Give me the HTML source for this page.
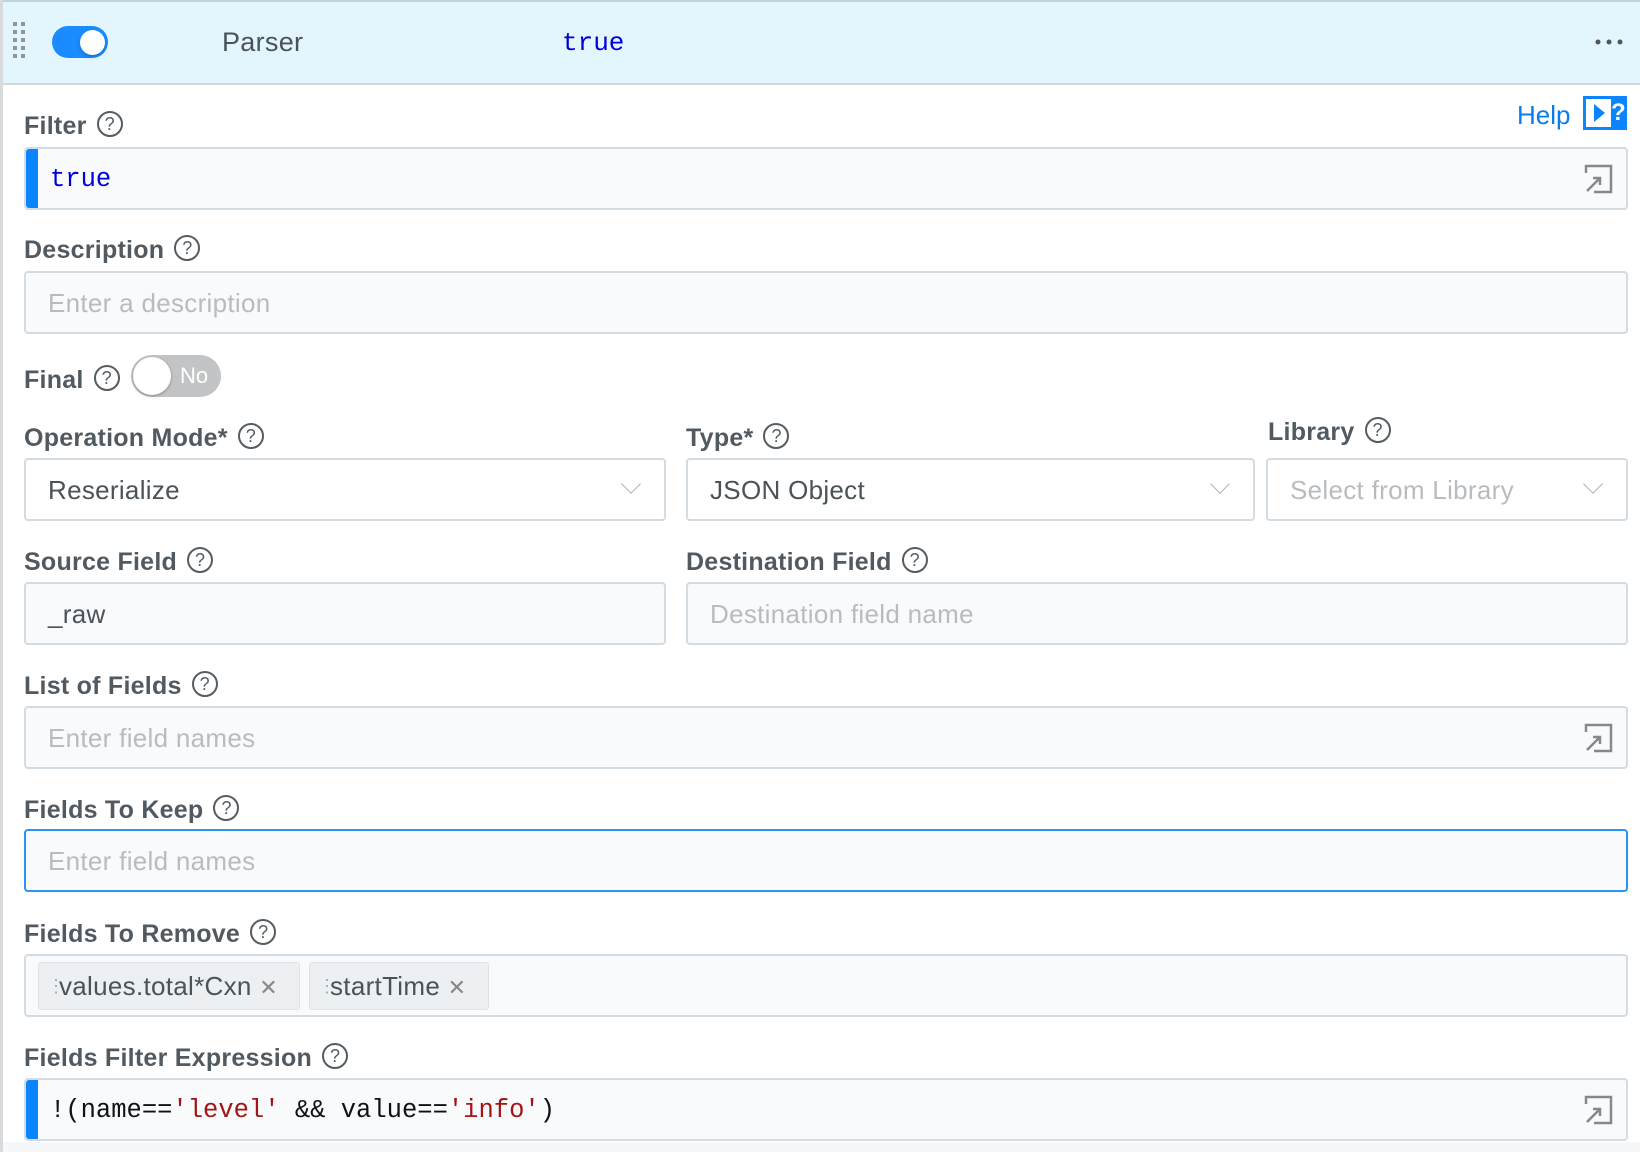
<!DOCTYPE html>
<html><head><meta charset="utf-8">
<style>
*{box-sizing:border-box;margin:0;padding:0}
body{width:1640px;height:1152px;background:#fff;font-family:"Liberation Sans",sans-serif;position:relative;overflow:hidden;color:#4a5358}
.abs{position:absolute}
.hdr{left:3px;top:0;width:1637px;height:85px;background:#e3f5fd;border-top:2px solid #c3d3dc;border-bottom:2px solid #d5d8da}
.side{left:0;top:0;width:3px;height:1152px;background:#d8dadb}
.lbl{position:absolute;font-size:25px;font-weight:bold;color:#515a60;white-space:nowrap;line-height:28px;letter-spacing:0.25px}
.q{display:inline-block;width:26px;height:26px;border:2px solid #555d62;border-radius:50%;font-size:18px;text-align:center;line-height:22px;font-weight:normal;color:#555d62;vertical-align:middle;margin-left:10px;position:relative;top:-3px;letter-spacing:0}
.inp{position:absolute;background:#f8fafc;border:2px solid #d3dce3;border-radius:4px;height:63px;font-size:26px;line-height:61px;padding-left:22px;color:#4a5358;letter-spacing:0.3px}
.ph{color:#b8bcbf}
.sel{background:#fff}
.mono{font-family:"Liberation Mono","DejaVu Sans Mono",monospace;letter-spacing:0;font-size:25.5px}
.bar{position:absolute;left:0;top:0;bottom:0;width:12px;background:#0a84ff;border-radius:3px 0 0 3px}
.chev{position:absolute;right:26px;top:17px;width:14px;height:14px;border-right:1.5px solid #aab0b5;border-bottom:1.5px solid #aab0b5;transform:rotate(45deg)}
.exp{position:absolute;right:12px;top:14px}
.tag{position:absolute;top:6px;height:48px;background:#ecf0f3;border:1px solid #dde3e8;border-radius:3px;font-size:26px;line-height:46px;padding-left:20px;color:#4a5358;white-space:nowrap}
</style></head><body>
<div class="abs side"></div>
<div class="abs hdr"></div>
<svg class="abs" style="left:13px;top:22px" width="14" height="40"><g fill="#8f969b"><rect x="0" y="0" width="4" height="4"/><rect x="8" y="0" width="4" height="4"/><rect x="0" y="8" width="4" height="4"/><rect x="8" y="8" width="4" height="4"/><rect x="0" y="16" width="4" height="4"/><rect x="8" y="16" width="4" height="4"/><rect x="0" y="24" width="4" height="4"/><rect x="8" y="24" width="4" height="4"/><rect x="0" y="32" width="4" height="4"/><rect x="8" y="32" width="4" height="4"/></g></svg>
<div class="abs" style="left:52px;top:26px;width:56px;height:32px;border-radius:16px;background:#1a8cff"></div>
<div class="abs" style="left:80px;top:30px;width:25px;height:25px;border-radius:50%;background:#fff;box-shadow:0 2px 4px rgba(0,0,0,.2)"></div>
<div class="abs" style="left:222px;top:27px;font-size:27px;color:#4a5358;letter-spacing:0.3px">Parser</div>
<div class="abs mono" style="left:562px;top:28px;font-size:26px;color:#0000d8">true</div>
<svg class="abs" style="left:1595px;top:38px" width="30" height="8"><g fill="#555"><circle cx="3" cy="4" r="2.5"/><circle cx="14" cy="4" r="2.5"/><circle cx="25" cy="4" r="2.5"/></g></svg>

<div class="abs" style="left:1517px;top:100px;font-size:26px;color:#0a7cf0">Help</div>
<div class="abs" style="left:1583px;top:96px;width:44px;height:34px;background:#0a84ff"></div>
<div class="abs" style="left:1586px;top:99px;width:25px;height:28px;background:#fff"></div>
<svg class="abs" style="left:1594px;top:104px" width="12" height="18"><path d="M0 0L11 9L0 18Z" fill="#0a84ff"/></svg>
<div class="abs" style="left:1611px;top:99px;font-size:24px;font-weight:bold;color:#fff">?</div>

<div class="lbl" style="left:24px;top:112px">Filter<span class="q">?</span></div>
<div class="inp mono" style="left:24px;top:147px;width:1604px;color:#0000d8;padding-left:24px"><div class="bar"></div>true
<svg class="exp" width="32" height="32"><path d="M4 10V3H29V29H12" fill="none" stroke="#888" stroke-width="2.5"/><path d="M5 28L18 15M11 15H18V22" fill="none" stroke="#888" stroke-width="2.5"/></svg></div>

<div class="lbl" style="left:24px;top:236px">Description<span class="q">?</span></div>
<div class="inp ph" style="left:24px;top:271px;width:1604px">Enter a description</div>

<div class="lbl" style="left:24px;top:366px">Final<span class="q">?</span></div>
<div class="abs" style="left:131px;top:355px;width:90px;height:42px;border-radius:21px;background:#c2c4c6"></div>
<div class="abs" style="left:133px;top:357px;width:38px;height:38px;border-radius:50%;background:#fff;box-shadow:0 1px 3px rgba(0,0,0,.3)"></div>
<div class="abs" style="left:180px;top:363px;font-size:22px;color:#fff">No</div>

<div class="lbl" style="left:24px;top:424px">Operation Mode*<span class="q">?</span></div>
<div class="lbl" style="left:686px;top:424px">Type*<span class="q">?</span></div>
<div class="lbl" style="left:1268px;top:418px">Library<span class="q">?</span></div>
<div class="inp sel" style="left:24px;top:458px;width:642px">Reserialize<div class="chev"></div></div>
<div class="inp sel" style="left:686px;top:458px;width:569px">JSON Object<div class="chev"></div></div>
<div class="inp sel ph" style="left:1266px;top:458px;width:362px">Select from Library<div class="chev"></div></div>

<div class="lbl" style="left:24px;top:548px">Source Field<span class="q">?</span></div>
<div class="lbl" style="left:686px;top:548px">Destination Field<span class="q">?</span></div>
<div class="inp" style="left:24px;top:582px;width:642px">_raw</div>
<div class="inp ph" style="left:686px;top:582px;width:942px">Destination field name</div>

<div class="lbl" style="left:24px;top:672px">List of Fields<span class="q">?</span></div>
<div class="inp ph" style="left:24px;top:706px;width:1604px">Enter field names
<svg class="exp" width="32" height="32"><path d="M4 10V3H29V29H12" fill="none" stroke="#888" stroke-width="2.5"/><path d="M5 28L18 15M11 15H18V22" fill="none" stroke="#888" stroke-width="2.5"/></svg></div>

<div class="lbl" style="left:24px;top:796px">Fields To Keep<span class="q">?</span></div>
<div class="inp ph" style="left:24px;top:829px;width:1604px;border-color:#2b95f5">Enter field names</div>

<div class="lbl" style="left:24px;top:920px">Fields To Remove<span class="q">?</span></div>
<div class="inp" style="left:24px;top:954px;width:1604px">
<div class="tag" style="left:12px;width:262px"><span style="position:absolute;left:8px;color:#aaa;font-size:18px">⋮</span>values.total*Cxn <span style="color:#888;font-size:22px">✕</span></div>
<div class="tag" style="left:283px;width:180px"><span style="position:absolute;left:8px;color:#aaa;font-size:18px">⋮</span>startTime <span style="color:#888;font-size:22px">✕</span></div>
</div>

<div class="lbl" style="left:24px;top:1044px">Fields Filter Expression<span class="q">?</span></div>
<div class="inp mono" style="left:24px;top:1078px;width:1604px;color:#111;padding-left:24px"><div class="bar"></div>!(name==<span style="color:#a31515">'level'</span> &amp;&amp; value==<span style="color:#a31515">'info'</span>)
<svg class="exp" width="32" height="32"><path d="M4 10V3H29V29H12" fill="none" stroke="#888" stroke-width="2.5"/><path d="M5 28L18 15M11 15H18V22" fill="none" stroke="#888" stroke-width="2.5"/></svg></div>
<div class="abs" style="left:3px;top:1142px;width:1637px;height:10px;background:#f6f7f8"></div>
</body></html>
